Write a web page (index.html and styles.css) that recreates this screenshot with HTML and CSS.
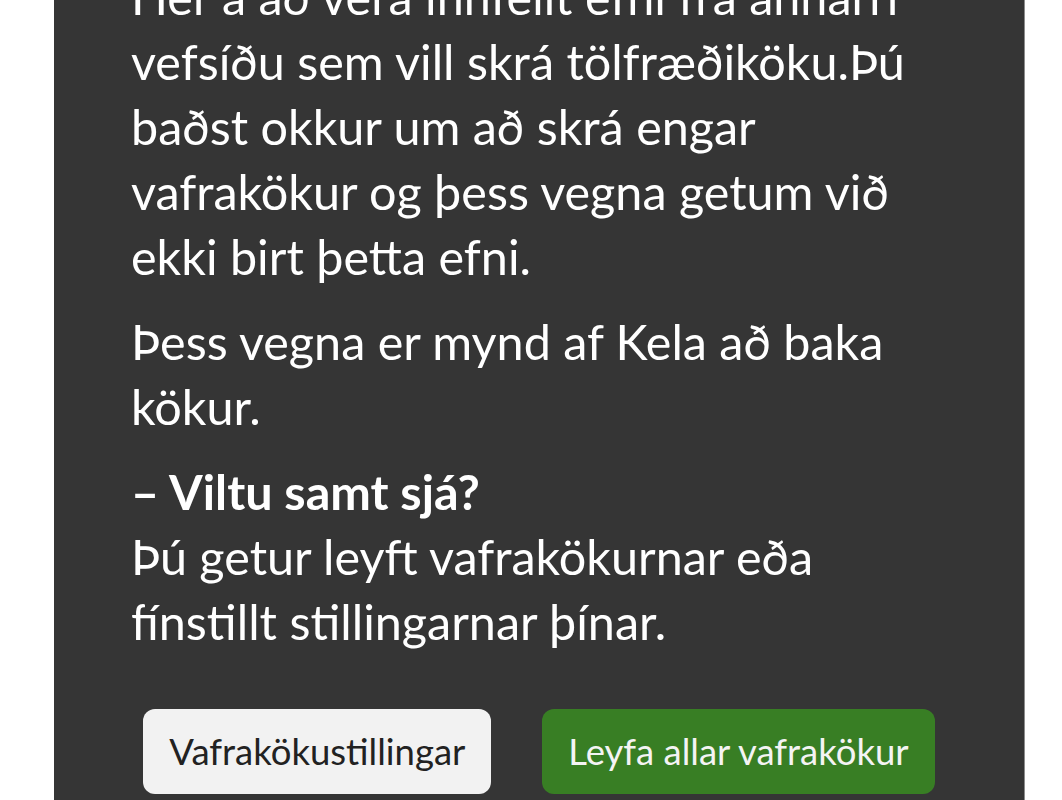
FILE: index.html
```html
<!DOCTYPE html>
<html lang="is">
  <head>
    <meta charset="UTF-8" />
    <meta name="viewport" content="width=device-width, initial-scale=1.0" />
    <title>Vafrakökur</title>
    <link rel="stylesheet" href="styles.css">
  </head>
  <body>
    <div class="consent-box">
      <div class="consent-text">
        <p>
          Hér á að vera innfellt efni frá annarri vefsíðu sem vill skrá
          tölfræðiköku.Þú baðst okkur um að skrá engar vafrakökur og þess
          vegna getum við ekki birt þetta efni.
        </p>
        <p>Þess vegna er mynd af Kela að baka kökur.</p>
        <p>
          <strong>– Viltu samt sjá?</strong><br />
          Þú getur leyft vafrakökurnar eða fínstillt stillingarnar þínar.
        </p>
      </div>
      <div class="consent-actions">
        <button type="button" class="btn btn-light">Vafrakökustillingar</button>
        <button type="button" class="btn btn-green">Leyfa allar vafrakökur</button>
      </div>
    </div>
  </body>
</html>
```

FILE: styles.css
```css
html,
body {
  margin: 0;
  height: 100%;
  overflow: hidden;
}
body {
  background-color: #ffffff;
  font-family: Lato, "Noto Sans", sans-serif;
}
.consent-box {
  display: flow-root;
  margin-left: 54px;
  width: 971px;
  min-height: 100%;
  background-color: #353535;
  border-right: 1px solid #8c8c8c;
  padding: 0 77px;
  box-sizing: border-box;
  color: #ffffff;
}
.consent-text {
  margin-top: -36px;
}
.consent-text p {
  margin: 0 0 20px;
  font-size: 48.5px;
  line-height: 65px;
}
.consent-text strong {
  font-weight: 700;
}
.consent-actions {
  display: flex;
  justify-content: center;
  gap: 51px;
  margin-top: 55px;
}
.btn {
  font-family: Lato, "Noto Sans", sans-serif;
  font-size: 36.5px;
  line-height: 43px;
  padding: 21px 26px;
  border: none;
  border-radius: 12px;
  cursor: pointer;
}
.btn-light {
  background-color: #f2f2f2;
  color: #222222;
}
.btn-green {
  background-color: #387e24;
  color: #f4f4f4;
}
```
